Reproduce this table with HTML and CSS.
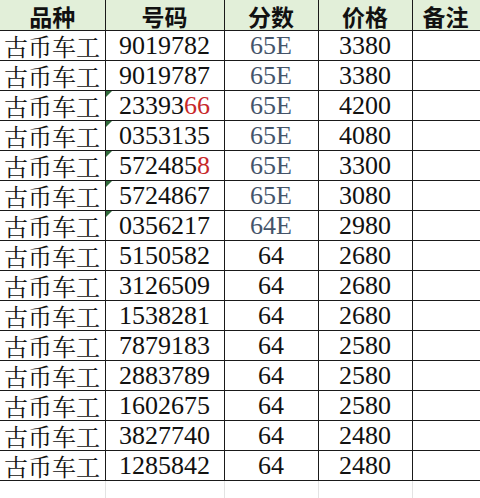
FILE: index.html
```html
<!DOCTYPE html>
<html lang="zh-CN">
<head>
<meta charset="utf-8">
<title>品种号码表</title>
<link rel="stylesheet" href="styles.css">
</head>
<body>
<table class="sheet">
  <colgroup>
    <col class="c1"><col class="c2"><col class="c3"><col class="c4"><col class="c5">
  </colgroup>
  <thead>
    <tr class="head">
      <th>品种</th><th>号码</th><th>分数</th><th>价格</th><th class="note">备注</th>
    </tr>
  </thead>
  <tbody>
    <tr><td class="kind">古币车工</td><td class="num">9019782</td><td class="score e">65E</td><td class="num">3380</td><td></td></tr>
    <tr><td class="kind">古币车工</td><td class="num">9019787</td><td class="score e">65E</td><td class="num">3380</td><td></td></tr>
    <tr><td class="kind">古币车工</td><td class="num flag">23393<span class="red">66</span></td><td class="score e">65E</td><td class="num">4200</td><td></td></tr>
    <tr><td class="kind">古币车工</td><td class="num flag">0353135</td><td class="score e">65E</td><td class="num">4080</td><td></td></tr>
    <tr><td class="kind">古币车工</td><td class="num flag">572485<span class="red">8</span></td><td class="score e">65E</td><td class="num">3300</td><td></td></tr>
    <tr><td class="kind">古币车工</td><td class="num flag">5724867</td><td class="score e">65E</td><td class="num">3080</td><td></td></tr>
    <tr><td class="kind">古币车工</td><td class="num flag">0356217</td><td class="score e">64E</td><td class="num">2980</td><td></td></tr>
    <tr><td class="kind">古币车工</td><td class="num">5150582</td><td class="score">64</td><td class="num">2680</td><td></td></tr>
    <tr><td class="kind">古币车工</td><td class="num">3126509</td><td class="score">64</td><td class="num">2680</td><td></td></tr>
    <tr><td class="kind">古币车工</td><td class="num">1538281</td><td class="score">64</td><td class="num">2680</td><td></td></tr>
    <tr><td class="kind">古币车工</td><td class="num">7879183</td><td class="score">64</td><td class="num">2580</td><td></td></tr>
    <tr><td class="kind">古币车工</td><td class="num">2883789</td><td class="score">64</td><td class="num">2580</td><td></td></tr>
    <tr><td class="kind">古币车工</td><td class="num">1602675</td><td class="score">64</td><td class="num">2580</td><td></td></tr>
    <tr><td class="kind">古币车工</td><td class="num">3827740</td><td class="score">64</td><td class="num">2480</td><td></td></tr>
    <tr><td class="kind">古币车工</td><td class="num">1285842</td><td class="score">64</td><td class="num">2480</td><td></td></tr>
    <tr class="blank"><td></td><td></td><td></td><td></td><td></td></tr>
  </tbody>
</table>
</body>
</html>
```

FILE: styles.css
```css
html, body {
  margin: 0;
  padding: 0;
  background: #ffffff;
}

body {
  width: 480px;
  height: 498px;
  overflow: hidden;
}

.sheet {
  width: 480px;
  table-layout: fixed;
  border-collapse: collapse;
  border-spacing: 0;
  color: #111111;
}

.c1 { width: 105px; }
.c2 { width: 119px; }
.c3 { width: 94px; }
.c4 { width: 94px; }
.c5 { width: 68px; }

.sheet th,
.sheet td {
  padding: 0;
  height: 29px;
  border-left: 1px solid #1a1a1a;
  border-bottom: 1px solid #1a1a1a;
  line-height: 1;
  white-space: nowrap;
  vertical-align: middle;
}

.sheet th:first-child,
.sheet td:first-child {
  border-left: none;
}

.head th {
  background: #e2efd9;
  font-family: "Noto Sans CJK SC", "Noto Sans", sans-serif;
  font-weight: 700;
  font-size: 23px;
  text-align: center;
  padding-top: 3px;
  height: 27px;
}

.head th.note {
  text-align: left;
  padding-left: 10px;
}

.sheet td.kind {
  font-family: "Noto Serif CJK SC", "Noto Sans CJK SC", serif;
  font-size: 24px;
  text-align: left;
  padding-left: 4px;
}

.num,
.score {
  font-family: "Liberation Serif", "DejaVu Serif", serif;
  font-size: 26px;
  text-align: center;
}

.score.e {
  color: #44546a;
}

.red {
  color: #c8282a;
}

.flag {
  position: relative;
}

.flag::before {
  content: "";
  position: absolute;
  left: 0;
  top: 0;
  width: 0;
  height: 0;
  border-top: 6px solid #2f6b3a;
  border-right: 6px solid transparent;
}

.blank td {
  height: 18px;
  border-left-color: #e3e3e3;
  border-bottom: none;
}
```
